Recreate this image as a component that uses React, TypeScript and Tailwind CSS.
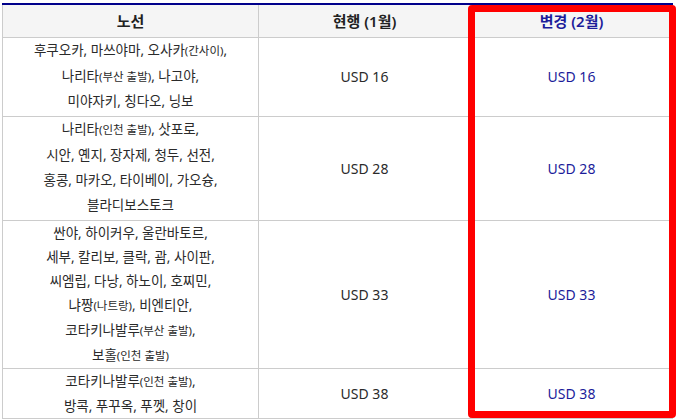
import React from "react";

const S = ({ children }: { children: React.ReactNode }) => (
  <span className="text-[11.5px]">{children}</span>
);

const rows: { h: string; lh: string; route: React.ReactNode[]; price: string }[] = [
  {
    h: "h-[79px]",
    lh: "leading-[25.5px]",
    route: [
      <>후쿠오카, 마쓰야마, 오사카<S>(간사이)</S>,</>,
      <>나리타<S>(부산 출발)</S>, 나고야,</>,
      <>미야자키, 칭다오, 닝보</>,
    ],
    price: "USD 16",
  },
  {
    h: "h-[104px]",
    lh: "leading-[25.3px]",
    route: [
      <>나리타<S>(인천 출발)</S>, 삿포로,</>,
      <>시안, 옌지, 장자제, 청두, 선전,</>,
      <>홍콩, 마카오, 타이베이, 가오슝,</>,
      <>블라디보스토크</>,
    ],
    price: "USD 28",
  },
  {
    h: "h-[145px]",
    lh: "leading-[24px]",
    route: [
      <>싼야, 하이커우, 울란바토르,</>,
      <>세부, 칼리보, 클락, 괌, 사이판,</>,
      <>씨엠립, 다낭, 하노이, 호찌민,</>,
      <>냐짱<S>(나트랑)</S>, 비엔티안,</>,
      <>코타키나발루<S>(부산 출발)</S>,</>,
      <>보홀<S>(인천 출발)</S></>,
    ],
    price: "USD 33",
  },
  {
    h: "h-[50px]",
    lh: "leading-[24px]",
    route: [
      <>코타키나발루<S>(인천 출발)</S>,</>,
      <>방콕, 푸꾸옥, 푸껫, 창이</>,
    ],
    price: "USD 38",
  },
];

export default function App() {
  return (
    <div
      className="relative w-[678px] h-[420px] bg-white overflow-hidden"
      style={{ fontFamily: '"Noto Sans", "Noto Sans CJK KR", sans-serif' }}
    >
      <div className="pt-[3px] pl-[2px]">
        <table className="w-[670px] border-collapse table-fixed border-t-2 border-t-[#00008b] text-[13.5px] text-[#2a2a2a]">
          <colgroup>
            <col className="w-[256px]" />
            <col className="w-[212px]" />
            <col className="w-[202px]" />
          </colgroup>
          <thead>
            <tr className="h-[33px] bg-[#f5f5f5]">
              <th className="border border-[#cccccc] border-t-0 text-[15px] font-semibold text-[#222] text-center p-0">노선</th>
              <th className="border border-[#cccccc] border-t-0 text-[15px] font-semibold text-[#222] text-center p-0">현행 (1월)</th>
              <th className="border border-[#cccccc] border-t-0 text-[15px] font-semibold text-[#1c1c9a] text-center p-0">변경 (2월)</th>
            </tr>
          </thead>
          <tbody>
            {rows.map((r, i) => (
              <tr key={i} className={r.h}>
                <td className={`border border-[#cccccc] text-center p-0 ${r.lh}`}>
                  {r.route.map((line, j) => (
                    <div key={j}>{line}</div>
                  ))}
                </td>
                <td className="border border-[#cccccc] text-center p-0 text-[14px]">{r.price}</td>
                <td className="border border-[#cccccc] text-center p-0 text-[14px] text-[#1c1c9a]">{r.price}</td>
              </tr>
            ))}
          </tbody>
        </table>
      </div>
      <div className="absolute left-[468px] top-[5px] w-[208px] h-[413px] border-[7px] border-[#ff0000] rounded-[4px]" />
    </div>
  );
}
